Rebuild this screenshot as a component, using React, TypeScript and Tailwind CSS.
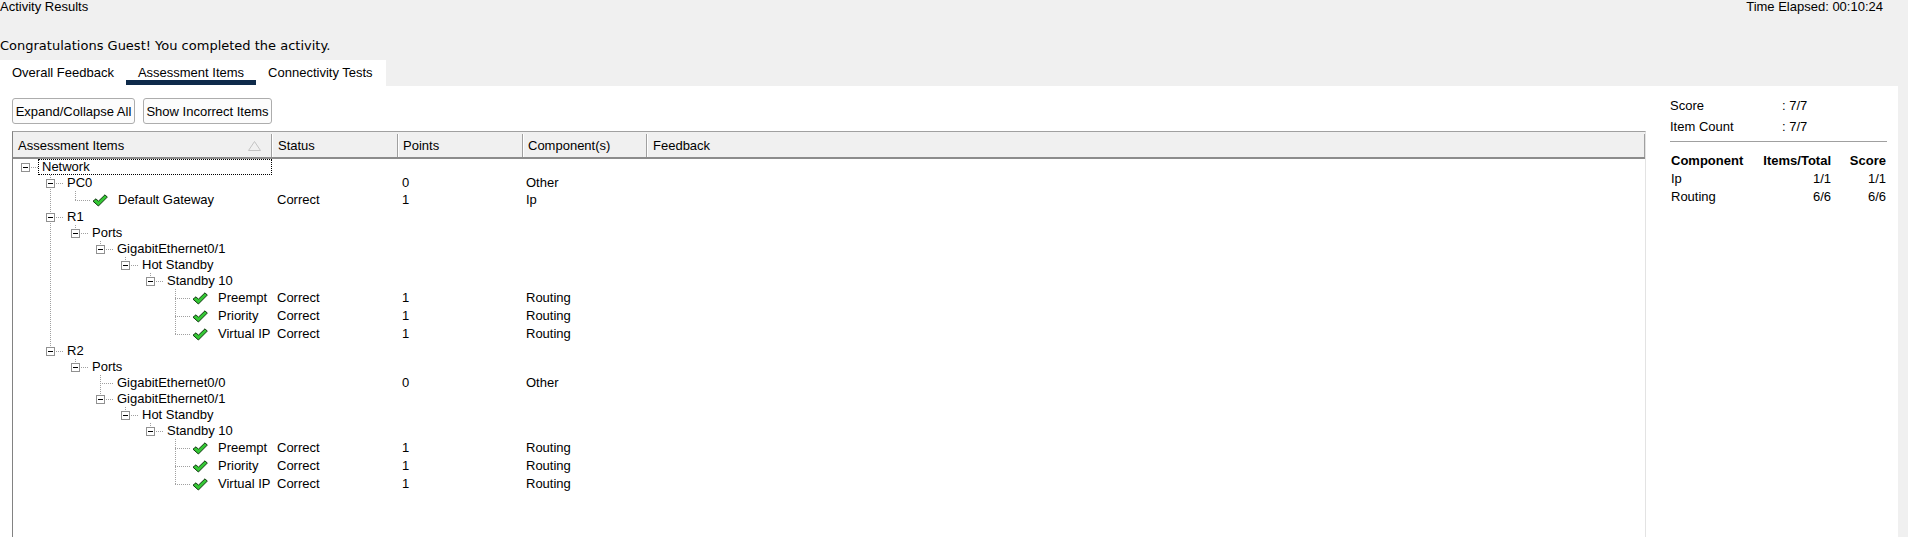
import React from 'react';

type Node = {
  label: string;
  icon?: boolean;
  status?: string;
  points?: string;
  comp?: string;
  children?: Node[];
};

type Row = { node: Node; level: number; trail: boolean[]; hasNext: boolean };

const hsrp = (): Node[] => [
  { label: 'Preempt', icon: true, status: 'Correct', points: '1', comp: 'Routing' },
  { label: 'Priority', icon: true, status: 'Correct', points: '1', comp: 'Routing' },
  { label: 'Virtual IP', icon: true, status: 'Correct', points: '1', comp: 'Routing' },
];

const gig01 = (): Node => ({
  label: 'GigabitEthernet0/1',
  children: [{ label: 'Hot Standby', children: [{ label: 'Standby 10', children: hsrp() }] }],
});

const tree: Node = {
  label: 'Network',
  children: [
    {
      label: 'PC0',
      points: '0',
      comp: 'Other',
      children: [{ label: 'Default Gateway', icon: true, status: 'Correct', points: '1', comp: 'Ip' }],
    },
    { label: 'R1', children: [{ label: 'Ports', children: [gig01()] }] },
    {
      label: 'R2',
      children: [
        {
          label: 'Ports',
          children: [{ label: 'GigabitEthernet0/0', points: '0', comp: 'Other' }, gig01()],
        },
      ],
    },
  ],
};

function flatten(node: Node, level: number, trail: boolean[], hasNext: boolean, out: Row[]) {
  out.push({ node, level, trail, hasNext });
  const kids = node.children ?? [];
  kids.forEach((c, i) => flatten(c, level + 1, [...trail, hasNext], i < kids.length - 1, out));
  return out;
}

const rows = flatten(tree, 0, [], false, []);

const DOT = { stroke: '#a0a0a0', strokeWidth: 1, strokeDasharray: '1 1', shapeRendering: 'crispEdges' as const };

// tree guide lines + expander box for one row
const Guides = ({ row, h }: { row: Row; h: number }) => {
  const { level, trail, hasNext, node } = row;
  const extra = node.icon ? 3 : 0;
  const w = 25 * (level + 1) + extra;
  const m = Math.floor(h / 2);
  const cx = 25 * level + 12;
  const lines: React.ReactNode[] = [];
  for (let k = 1; k < level; k++) {
    if (trail[k]) lines.push(<line key={'v' + k} x1={25 * k + 12.5} y1={0} x2={25 * k + 12.5} y2={h} {...DOT} />);
  }
  if (level > 0) {
    lines.push(<line key="self" x1={cx + 0.5} y1={0} x2={cx + 0.5} y2={hasNext ? h : m} {...DOT} />);
  }
  lines.push(<line key="h" x1={cx} y1={m + 0.5} x2={w} y2={m + 0.5} {...DOT} />);
  const open = !!node.children?.length;
  return (
    <svg width={w} height={h} className="shrink-0">
      {lines}
      {open && (
        <g shapeRendering="crispEdges">
          <rect x={cx - 3.5} y={m - 3.5} width={8} height={8} fill="#fff" stroke="#919191" />
          <line x1={cx - 2} y1={m + 0.5} x2={cx + 3} y2={m + 0.5} stroke="#000" />
        </g>
      )}
    </svg>
  );
};

const Check = () => (
  <svg width="16" height="13" viewBox="0 0 16 13" className="shrink-0">
    <path
      d="M1 7.2 L4 4.8 L6.4 7.2 L13 0.8 L15.3 3.1 L6.4 12 Z"
      fill="#34c834"
      stroke="#103810"
      strokeWidth="1"
      strokeLinejoin="round"
    />
  </svg>
);

const SortArrow = () => (
  <svg width="13" height="10" viewBox="0 0 13 10">
    <path d="M6.5 0.5 L12.5 9.5 L0.5 9.5 Z" fill="none" stroke="#c4c4c4" />
  </svg>
);

const App: React.FC = () => {
  return (
    <div className="h-[537px] w-[1908px] overflow-hidden bg-[#f0f0f0] font-['Liberation_Sans',Arial,sans-serif] text-[13px] text-black">
      {/* title bar */}
      <div className="flex h-[14px] justify-between pr-[25px] leading-[14px]">
        <span>Activity Results</span>
        <span>Time Elapsed: 00:10:24</span>
      </div>

      <div className="mt-[24px] font-['DejaVu_Sans',sans-serif] leading-[15px]">
        Congratulations Guest! You completed the activity.
      </div>

      {/* tabs */}
      <div className="mt-[7px] flex h-[26px] w-[386px] bg-white leading-[15px]">
        <div className="h-[25px] border-b-[5px] border-transparent px-3 pt-[5px]">Overall Feedback</div>
        <div className="h-[25px] border-b-[5px] border-[#0e2a4a] px-3 pt-[5px]">Assessment Items</div>
        <div className="h-[25px] border-b-[5px] border-transparent px-3 pt-[5px]">Connectivity Tests</div>
      </div>

      {/* main panel */}
      <div className="flex h-[451px] w-[1898px] bg-white">
        <div className="flex min-w-0 flex-1 flex-col pl-[12px] pt-[12px]">
          <div className="flex gap-[8px]">
            <button className="h-[26px] w-[123px] rounded-[3px] border border-[#adadad] bg-[#fcfcfc] text-center leading-[15px]">
              Expand/Collapse All
            </button>
            <button className="h-[26px] w-[129px] rounded-[3px] border border-[#adadad] bg-[#fcfcfc] text-center leading-[15px]">
              Show Incorrect Items
            </button>
          </div>

          <div className="mt-[7px] h-[420px] border-l border-t border-r border-l-[#828282] border-t-[#a0a0a0] border-r-[#e3e3e3]">
            {/* header */}
            <div className="flex h-[27px] border-b-2 border-[#8c8c8c] bg-[#f0f0f0] pt-[2px]">
              <div className="flex w-[259px] items-center justify-between border-r border-[#a0a0a0] pl-[5px] pr-[10px]">
                <span>Assessment Items</span>
                <SortArrow />
              </div>
              <div className="flex w-[126px] items-center border-l border-r border-l-white border-r-[#a0a0a0] pl-[5px]">Status</div>
              <div className="flex w-[125px] items-center border-l border-r border-l-white border-r-[#a0a0a0] pl-[4px]">Points</div>
              <div className="flex w-[124px] items-center border-l border-r border-l-white border-r-[#a0a0a0] pl-[4px]">Component(s)</div>
              <div className="flex flex-1 items-center border-l border-r border-l-white border-r-[#a0a0a0] pl-[5px]">Feedback</div>
            </div>

            {/* body */}
            <div className="flex flex-col">
              {rows.map((row, i) => {
                const h = row.node.icon ? 18 : 16;
                const focus = i === 0;
                return (
                  <div key={i} className={`flex ${row.node.icon ? 'h-[18px]' : 'h-[16px]'} items-center`}>
                    <div className="flex h-full w-[259px] items-center">
                      <Guides row={row} h={h} />
                      {row.node.icon && (
                        <span className="ml-[1px] flex items-center">
                          <Check />
                        </span>
                      )}
                      <span
                        className={`flex h-[16px] items-center border pl-[3px] ${
                          focus ? 'flex-1 border-dotted border-black' : 'border-transparent'
                        } ${row.node.icon ? 'ml-[6px]' : ''}`}
                      >
                        {row.node.label}
                      </span>
                    </div>
                    <div className="w-[126px] pl-[5px]">{row.node.status}</div>
                    <div className="w-[125px] pl-[4px]">{row.node.points}</div>
                    <div className="w-[124px] pl-[3px]">{row.node.comp}</div>
                  </div>
                );
              })}
            </div>
          </div>
        </div>

        {/* summary */}
        <div className="w-[252px] shrink-0 pl-[24px] pr-[11px] pt-[12px]">
          <div className="flex flex-col gap-[5px]">
            <div className="flex h-[16px] items-center">
              <span className="w-[112px]">Score</span>
              <span>: 7/7</span>
            </div>
            <div className="flex h-[16px] items-center">
              <span className="w-[112px]">Item Count</span>
              <span>: 7/7</span>
            </div>
          </div>
          <div className="mt-[6px] h-px bg-[#a0a0a0]" />
          <div className="mt-[10px] grid grid-cols-[90px_70px_55px] pl-[1px]">
            <div className="flex h-[18px] items-center font-bold">Component</div>
            <div className="flex h-[18px] items-center justify-end font-bold">Items/Total</div>
            <div className="flex h-[18px] items-center justify-end font-bold">Score</div>
            <div className="flex h-[18px] items-center">Ip</div>
            <div className="flex h-[18px] items-center justify-end">1/1</div>
            <div className="flex h-[18px] items-center justify-end">1/1</div>
            <div className="flex h-[18px] items-center">Routing</div>
            <div className="flex h-[18px] items-center justify-end">6/6</div>
            <div className="flex h-[18px] items-center justify-end">6/6</div>
          </div>
        </div>
      </div>
    </div>
  );
};

export default App;
